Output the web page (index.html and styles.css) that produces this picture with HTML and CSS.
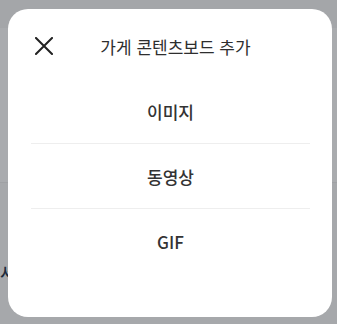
FILE: index.html
```
<!DOCTYPE html>
<html lang="ko">
<head>
  <meta charset="UTF-8">
  <title>가게 콘텐츠보드 추가</title>
  <meta name="viewport" content="width=device-width, initial-scale=1.0">
  <link rel="stylesheet" href="styles.css">
</head>
<body>
<div class="page">
  <div class="page-top"></div>
  <div class="page-mid"></div>
  <div class="page-low">
    <div class="page-text">서</div>
  </div>
</div>

<div class="overlay">
  <div class="sheet">
    <div class="sheet-header">
      <button class="close-btn" aria-label="닫기">
        <svg width="18" height="18" viewBox="0 0 18 18" fill="none" xmlns="http://www.w3.org/2000/svg">
          <path d="M1 1L17 17M17 1L1 17" stroke="#222" stroke-width="2" stroke-linecap="square"/>
        </svg>
      </button>
      <div class="sheet-title">가게 콘텐츠보드 추가</div>
    </div>
    <ul class="sheet-list">
      <li class="sheet-item">이미지</li>
      <li class="sheet-item">동영상</li>
      <li class="sheet-item">GIF</li>
    </ul>
  </div>
</div>
</body>
</html>
```

FILE: styles.css
```
html, body {
  margin: 0;
  padding: 0;
  height: 100%;
}
body {
  font-family: 'Noto Sans CJK KR', 'Noto Sans', sans-serif;
  background: #a8aaad;
  color: #2b2b2b;
  position: relative;
  overflow: hidden;
}
.page {
  display: flex;
  flex-direction: column;
  height: 324px;
}
.page-top {
  height: 28px;
  background: #a4a6a9;
}
.page-mid {
  height: 155px;
  background: #a9abae;
  box-shadow: inset 0 -83px 0 -82px #9fa1a4;
}
.page-low {
  flex: 1;
  background: #a6a8ab;
}
.page-text {
  margin: 79px 0 0 0;
  font-size: 16px;
  font-weight: 500;
  color: #1c2a3a;
  line-height: 20px;
}
.overlay {
  position: absolute;
  left: 0; top: 0; right: 0; bottom: 0;
  padding: 9px 5px 7px 8px;
}
.sheet {
  background: #fff;
  border-radius: 20px;
  height: 308px;
  overflow: hidden;
}
.sheet-header {
  display: flex;
  align-items: center;
  height: 66px;
  padding: 4px 27px 0 27px;
}
.close-btn {
  width: 18px;
  height: 18px;
  padding: 0;
  margin: 0;
  border: none;
  background: transparent;
  display: flex;
}
.sheet-title {
  flex: 1;
  text-align: center;
  padding-right: 7px;
  font-size: 17px;
  font-weight: 400;
  color: #2e2e2e;
}
.sheet-list {
  list-style: none;
  margin: 0;
  padding: 0 22px 0 23px;
}
.sheet-item {
  height: 64px;
  display: flex;
  align-items: center;
  justify-content: center;
  font-size: 17px;
  font-weight: 500;
  color: #333;
  border-bottom: 1px solid #eeeeee;
}
.sheet-item:last-child {
  border-bottom: none;
}
```
